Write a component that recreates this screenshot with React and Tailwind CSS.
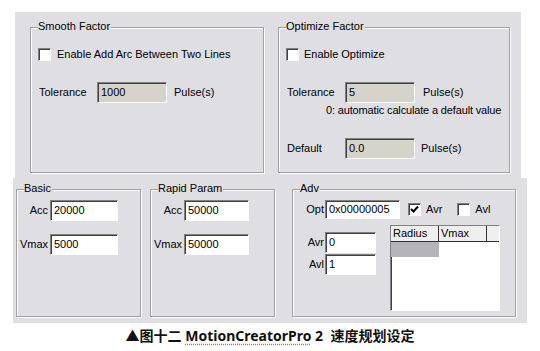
import React from 'react';

const sunken =
  'border border-t-[#808080] border-l-[#808080] border-b-white border-r-white shadow-[inset_1px_1px_0_#404040]';

const GroupBox = ({ label, className, children }) => (
  <div className={`relative border border-[#a0a0a4] shadow-[inset_1px_1px_0_#fff,1px_1px_0_#fff] ${className}`}>
    <span className="absolute -top-[8px] left-[7px] bg-[#dfdfe3] pr-[1px] leading-[13px]">{label}</span>
    {children}
  </div>
);

const CheckBox = ({ checked }) => (
  <span className={`w-[13px] h-[13px] bg-white flex items-center justify-center shrink-0 ${sunken}`}>
    {checked && (
      <svg width="9" height="9" viewBox="0 0 9 9">
        <path d="M1 4 L3.5 6.5 L8 1.5" stroke="#000" strokeWidth="2" fill="none" />
      </svg>
    )}
  </span>
);

const Field = ({ value, readOnly, className }) => (
  <div className={`flex items-center pl-[3px] ${readOnly ? 'bg-[#d6d3cb]' : 'bg-white'} ${sunken} ${className}`}>
    {value}
  </div>
);

const App = () => {
  return (
    <div
      className="w-[540px] h-[351px] bg-white text-[11px] leading-[13px] text-black overflow-hidden"
      style={{ fontFamily: '"Liberation Sans", Arial, sans-serif' }}
    >
      {/* top panel */}
      <div className="ml-[15px] mt-[12px] w-[506px] h-[166px] bg-[#dfdfe3] flex gap-[14px] pl-[15px] pt-[15px]">
        <GroupBox label="Smooth Factor" className="w-[234px] h-[146px] pl-[7px] pt-[20px]">
          <div className="flex items-center gap-[6px]">
            <CheckBox />
            <span>Enable Add Arc Between Two Lines</span>
          </div>
          <div className="flex items-center mt-[21px]">
            <span className="w-[59px] pl-[1px]">Tolerance</span>
            <Field value="1000" readOnly className="w-[70px] h-[21px]" />
            <span className="ml-[7px]">Pulse(s)</span>
          </div>
        </GroupBox>
        <GroupBox label="Optimize Factor" className="w-[232px] h-[146px] pl-[7px] pt-[20px]">
          <div className="flex items-center gap-[5px]">
            <CheckBox />
            <span>Enable Optimize</span>
          </div>
          <div className="flex items-center mt-[21px]">
            <span className="w-[59px] pl-[1px]">Tolerance</span>
            <Field value="5" readOnly className="w-[70px] h-[21px]" />
            <span className="ml-[8px]">Pulse(s)</span>
          </div>
          <div className="ml-[40px] mt-[1px] tracking-[-0.15px]">0: automatic calculate a default value</div>
          <div className="flex items-center mt-[21px]">
            <span className="w-[59px] pl-[1px]">Default</span>
            <Field value="0.0" readOnly className="w-[70px] h-[21px]" />
            <span className="ml-[6px]">Pulse(s)</span>
          </div>
        </GroupBox>
      </div>

      {/* lower panel */}
      <div className="ml-[13px] w-[514px] h-[145px] bg-[#dfdfe3] flex pl-[3px] pt-[11px]">
        <GroupBox label="Basic" className="w-[125px] h-[128px] pt-[10px]">
          <div className="flex items-center">
            <span className="w-[31px] text-right">Acc</span>
            <Field value="20000" className="ml-[2px] w-[68px] h-[21px]" />
          </div>
          <div className="flex items-center mt-[13px]">
            <span className="w-[31px] text-right">Vmax</span>
            <Field value="5000" className="ml-[2px] w-[68px] h-[21px]" />
          </div>
        </GroupBox>
        <GroupBox label="Rapid Param" className="ml-[9px] w-[125px] h-[128px] pt-[10px]">
          <div className="flex items-center">
            <span className="w-[31px] text-right">Acc</span>
            <Field value="50000" className="ml-[2px] w-[65px] h-[21px]" />
          </div>
          <div className="flex items-center mt-[13px]">
            <span className="w-[31px] text-right">Vmax</span>
            <Field value="50000" className="ml-[2px] w-[65px] h-[21px]" />
          </div>
        </GroupBox>
        <GroupBox label="Adv" className="ml-[17px] w-[224px] h-[128px] pt-[10px]">
          <div className="flex items-center">
            <span className="w-[31px] text-right">Opt</span>
            <Field value="0x00000005" className="ml-[1px] w-[75px] h-[19px]" />
            <span className="ml-[8px]"><CheckBox checked /></span>
            <span className="ml-[5px]">Avr</span>
            <span className="ml-[15px]"><CheckBox /></span>
            <span className="ml-[5px]">Avl</span>
          </div>
          <div className="flex mt-[6px]">
            <div className="pt-[7px]">
              <div className="flex items-center">
                <span className="w-[31px] text-right">Avr</span>
                <Field value="0" className="ml-[1px] w-[51px] h-[21px]" />
              </div>
              <div className="flex items-center mt-[1px]">
                <span className="w-[31px] text-right">Avl</span>
                <Field value="1" className="ml-[1px] w-[51px] h-[21px]" />
              </div>
            </div>
            <div className={`ml-[14px] w-[110px] h-[86px] bg-white ${sunken}`}>
              <div className="flex h-[16px] bg-[#efefef] border-b border-[#303030] leading-[15px]">
                <span className="w-[48px] pl-[2px] border-r border-[#303030]">Radius</span>
                <span className="w-[48px] pl-[2px] border-r border-[#303030]">Vmax</span>
              </div>
              <div className="flex h-[15px]">
                <span className="w-[48px] bg-[#b4b4ba]" />
                <span className="w-[48px] bg-white" />
              </div>
            </div>
          </div>
        </GroupBox>
      </div>

      {/* caption */}
      <div
        className="mt-[4px] text-center text-[14px] leading-[18px] font-bold text-[#111]"
        style={{ fontFamily: '"Noto Sans", "Noto Sans CJK SC", sans-serif' }}
      >
        ▲图十二 <span className="underline decoration-dotted decoration-[#9a7a5a] underline-offset-[3px]">MotionCreatorPro</span> 2&nbsp;&nbsp;速度规划设定
      </div>
    </div>
  );
};

export default App;
